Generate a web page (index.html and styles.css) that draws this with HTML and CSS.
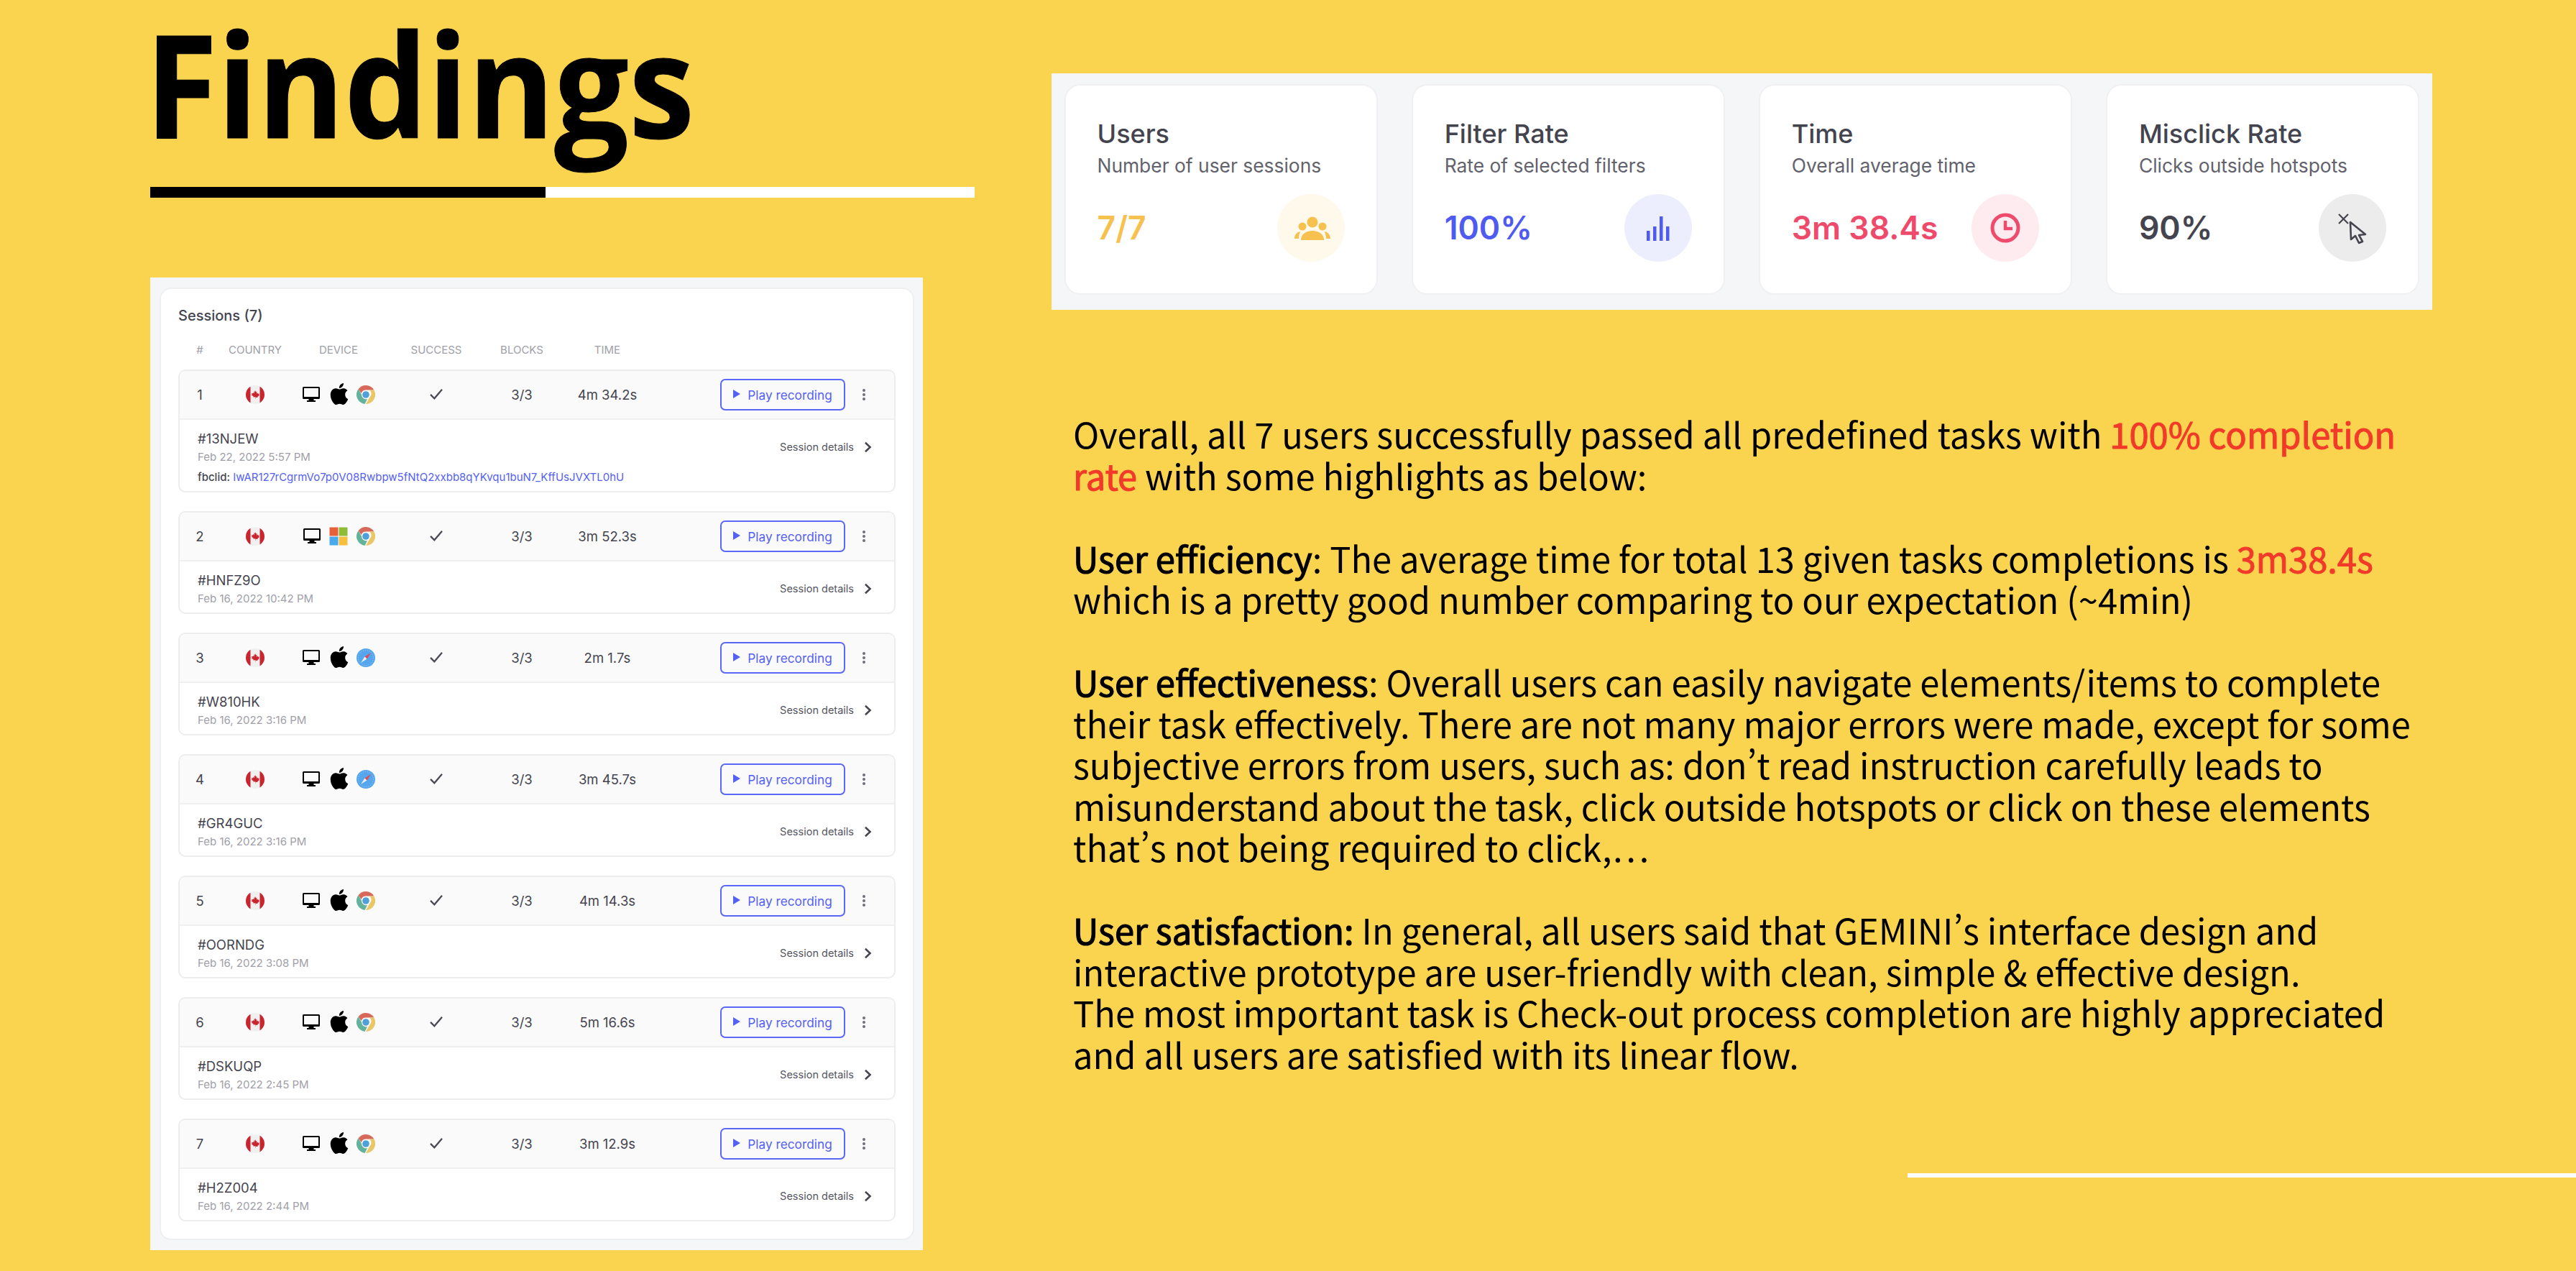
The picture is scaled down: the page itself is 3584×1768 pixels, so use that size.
FILE: index.html
```html
<!DOCTYPE html>
<html lang="en">
<head>
<meta charset="utf-8">
<title>Findings</title>
<link rel="stylesheet" href="styles.css">
</head>
<body>
<svg class="defs" width="0" height="0" aria-hidden="true">
  <symbol id="i-flag" viewBox="0 0 26 26">
    <clipPath id="flag-clip"><circle cx="13" cy="13" r="13"/></clipPath>
    <g clip-path="url(#flag-clip)">
      <rect width="26" height="26" fill="#f1f0f0"/>
      <rect width="6.5" height="26" fill="#c9252f"/>
      <rect x="19.5" width="6.5" height="26" fill="#c9252f"/>
      <path d="M13 7l1.3 2.4 1.2-.6-.5 3 1.6-1.2.5 1.2 1.7-.2-.6 1.800.8.5-2.800 2.100.3 1.100-2.900-.4V19h-.3v-2.800l-2.900.4.3-1.100-2.800-2.100.8-.5-.6-1.800 1.700.2.5-1.200 1.600 1.200-.5-3 1.200.6z" fill="#c9252f"/>
    </g>
  </symbol>
  <symbol id="i-desktop" viewBox="0 0 26 24">
    <path fill-rule="evenodd" d="M2.5 1h21A1.500 1.500 0 0 1 25 2.500v14a1.500 1.500 0 0 1-1.500 1.500H16.500v2H19v2H7v-2h2.500v-2h-7A1.500 1.500 0 0 1 1 16.500v-14A1.500 1.500 0 0 1 2.500 1zM3 3v12h20V3z" fill="#000"/>
  </symbol>
  <symbol id="i-apple" viewBox="0 0 24 24">
    <path fill="#000" d="M12.152 6.896c-.948 0-2.415-1.078-3.960-1.040-2.040.027-3.910 1.183-4.961 3.014-2.117 3.675-.546 9.103 1.519 12.090 1.013 1.454 2.208 3.090 3.792 3.039 1.520-.065 2.090-.987 3.935-.987 1.831 0 2.350.987 3.960.948 1.637-.026 2.676-1.480 3.676-2.948 1.156-1.688 1.636-3.325 1.662-3.415-.039-.013-3.182-1.221-3.220-4.857-.026-3.040 2.480-4.494 2.597-4.559-1.429-2.090-3.623-2.324-4.390-2.376-2-.156-3.675 1.090-4.610 1.090zM15.530 3.830c.843-1.012 1.400-2.427 1.245-3.830-1.207.052-2.662.805-3.532 1.818-.780.896-1.454 2.338-1.273 3.714 1.338.104 2.715-.688 3.559-1.701"/>
  </symbol>
  <symbol id="i-chrome" viewBox="0 0 26 26">
    <path d="M13 0a13 13 0 0 1 11.300 6.500H13a6.500 6.500 0 0 0-6.300 4.800L2.600 5.200A13 13 0 0 1 13 0z" fill="#d8685a"/>
    <path d="M24.300 6.500A13 13 0 0 1 13 26l5.600-9.700a6.500 6.500 0 0 0-.6-9.800z" fill="#e9c766"/>
    <path d="M2.600 5.200l5.600 9.700a6.500 6.500 0 0 0 6.800 4.400L11.500 25.900A13 13 0 0 1 2.600 5.200z" fill="#62b29c"/>
    <circle cx="13" cy="13" r="6" fill="#fff"/>
    <circle cx="13" cy="13" r="4.800" fill="#4fa0d8"/>
  </symbol>
  <symbol id="i-windows" viewBox="0 0 25 25">
    <rect x="0.5" y="0.5" width="11.5" height="11.5" fill="#e8603a"/>
    <rect x="13" y="0.5" width="11.5" height="11.5" fill="#8fbc36"/>
    <rect x="0.5" y="13" width="11.5" height="11.5" fill="#4aa8ec"/>
    <rect x="13" y="13" width="11.5" height="11.5" fill="#f8bf3e"/>
  </symbol>
  <symbol id="i-safari" viewBox="0 0 26 26">
    <circle cx="13" cy="13" r="13" fill="#55a6ec"/>
    <circle cx="13" cy="13" r="10.5" fill="none" stroke="#a9d3f6" stroke-width="1" stroke-dasharray="1 2"/>
    <path d="M20 6l-8.500 5.500 3 3z" fill="#e8474c"/>
    <path d="M6 20l5.500-8.500 3 3z" fill="#eef2f5"/>
  </symbol>
  <symbol id="i-check" viewBox="0 0 22 18">
    <path d="M2 10l6 6L20 2" fill="none" stroke="#4a4a55" stroke-width="2.6"/>
  </symbol>
  <symbol id="i-play" viewBox="0 0 10 12">
    <path d="M0 0l10 6-10 6z" fill="#5561f5"/>
  </symbol>
  <symbol id="i-dots" viewBox="0 0 6 18">
    <circle cx="3" cy="3" r="2" fill="#6e6e78"/>
    <circle cx="3" cy="9" r="2" fill="#6e6e78"/>
    <circle cx="3" cy="15" r="2" fill="#6e6e78"/>
  </symbol>
  <symbol id="i-chevron" viewBox="0 0 12 18">
    <path d="M2 2l7.500 7L2 16" fill="none" stroke="#45454f" stroke-width="2.8"/>
  </symbol>
</svg>

<main class="slide">
  <section class="left">
    <h1 class="title">Findings</h1>
    <div class="bar"><span class="bar-black"></span><span class="bar-white"></span></div>
    <div class="sessions-panel">
      <div class="sessions-card">
        <h2 class="sessions-title">Sessions (7)</h2>
        <div class="cols cols-head">
          <span>#</span><span>COUNTRY</span><span>DEVICE</span><span>SUCCESS</span><span>BLOCKS</span><span>TIME</span>
        </div>

        <article class="row">
          <div class="cols row-head">
            <span>1</span>
            <svg class="flag"><use href="#i-flag"/></svg>
            <span class="devices"><svg class="ic-desk"><use href="#i-desktop"/></svg><svg class="ic-os"><use href="#i-apple"/></svg><svg class="ic-br"><use href="#i-chrome"/></svg></span>
            <svg class="check"><use href="#i-check"/></svg>
            <span>3/3</span>
            <span>4m 34.2s</span>
            <a class="play"><svg class="play-ic"><use href="#i-play"/></svg>Play recording</a>
            <svg class="dots"><use href="#i-dots"/></svg>
          </div>
          <div class="row-body">
            <div class="meta">
              <div class="sid">#13NJEW</div>
              <div class="date">Feb 22, 2022 5:57 PM</div>
              <div class="fb"><b>fbclid:</b> <span>IwAR127rCgrmVo7p0V08Rwbpw5fNtQ2xxbb8qYKvqu1buN7_KffUsJVXTL0hU</span></div>
            </div>
            <a class="details">Session details<svg class="chev"><use href="#i-chevron"/></svg></a>
          </div>
        </article>

        <article class="row">
          <div class="cols row-head">
            <span>2</span>
            <svg class="flag"><use href="#i-flag"/></svg>
            <span class="devices"><svg class="ic-desk"><use href="#i-desktop"/></svg><svg class="ic-win"><use href="#i-windows"/></svg><svg class="ic-br"><use href="#i-chrome"/></svg></span>
            <svg class="check"><use href="#i-check"/></svg>
            <span>3/3</span>
            <span>3m 52.3s</span>
            <a class="play"><svg class="play-ic"><use href="#i-play"/></svg>Play recording</a>
            <svg class="dots"><use href="#i-dots"/></svg>
          </div>
          <div class="row-body">
            <div class="meta"><div class="sid">#HNFZ9O</div><div class="date">Feb 16, 2022 10:42 PM</div></div>
            <a class="details">Session details<svg class="chev"><use href="#i-chevron"/></svg></a>
          </div>
        </article>

        <article class="row">
          <div class="cols row-head">
            <span>3</span>
            <svg class="flag"><use href="#i-flag"/></svg>
            <span class="devices"><svg class="ic-desk"><use href="#i-desktop"/></svg><svg class="ic-os"><use href="#i-apple"/></svg><svg class="ic-br"><use href="#i-safari"/></svg></span>
            <svg class="check"><use href="#i-check"/></svg>
            <span>3/3</span>
            <span>2m 1.7s</span>
            <a class="play"><svg class="play-ic"><use href="#i-play"/></svg>Play recording</a>
            <svg class="dots"><use href="#i-dots"/></svg>
          </div>
          <div class="row-body">
            <div class="meta"><div class="sid">#W810HK</div><div class="date">Feb 16, 2022 3:16 PM</div></div>
            <a class="details">Session details<svg class="chev"><use href="#i-chevron"/></svg></a>
          </div>
        </article>

        <article class="row">
          <div class="cols row-head">
            <span>4</span>
            <svg class="flag"><use href="#i-flag"/></svg>
            <span class="devices"><svg class="ic-desk"><use href="#i-desktop"/></svg><svg class="ic-os"><use href="#i-apple"/></svg><svg class="ic-br"><use href="#i-safari"/></svg></span>
            <svg class="check"><use href="#i-check"/></svg>
            <span>3/3</span>
            <span>3m 45.7s</span>
            <a class="play"><svg class="play-ic"><use href="#i-play"/></svg>Play recording</a>
            <svg class="dots"><use href="#i-dots"/></svg>
          </div>
          <div class="row-body">
            <div class="meta"><div class="sid">#GR4GUC</div><div class="date">Feb 16, 2022 3:16 PM</div></div>
            <a class="details">Session details<svg class="chev"><use href="#i-chevron"/></svg></a>
          </div>
        </article>

        <article class="row">
          <div class="cols row-head">
            <span>5</span>
            <svg class="flag"><use href="#i-flag"/></svg>
            <span class="devices"><svg class="ic-desk"><use href="#i-desktop"/></svg><svg class="ic-os"><use href="#i-apple"/></svg><svg class="ic-br"><use href="#i-chrome"/></svg></span>
            <svg class="check"><use href="#i-check"/></svg>
            <span>3/3</span>
            <span>4m 14.3s</span>
            <a class="play"><svg class="play-ic"><use href="#i-play"/></svg>Play recording</a>
            <svg class="dots"><use href="#i-dots"/></svg>
          </div>
          <div class="row-body">
            <div class="meta"><div class="sid">#OORNDG</div><div class="date">Feb 16, 2022 3:08 PM</div></div>
            <a class="details">Session details<svg class="chev"><use href="#i-chevron"/></svg></a>
          </div>
        </article>

        <article class="row">
          <div class="cols row-head">
            <span>6</span>
            <svg class="flag"><use href="#i-flag"/></svg>
            <span class="devices"><svg class="ic-desk"><use href="#i-desktop"/></svg><svg class="ic-os"><use href="#i-apple"/></svg><svg class="ic-br"><use href="#i-chrome"/></svg></span>
            <svg class="check"><use href="#i-check"/></svg>
            <span>3/3</span>
            <span>5m 16.6s</span>
            <a class="play"><svg class="play-ic"><use href="#i-play"/></svg>Play recording</a>
            <svg class="dots"><use href="#i-dots"/></svg>
          </div>
          <div class="row-body">
            <div class="meta"><div class="sid">#DSKUQP</div><div class="date">Feb 16, 2022 2:45 PM</div></div>
            <a class="details">Session details<svg class="chev"><use href="#i-chevron"/></svg></a>
          </div>
        </article>

        <article class="row">
          <div class="cols row-head">
            <span>7</span>
            <svg class="flag"><use href="#i-flag"/></svg>
            <span class="devices"><svg class="ic-desk"><use href="#i-desktop"/></svg><svg class="ic-os"><use href="#i-apple"/></svg><svg class="ic-br"><use href="#i-chrome"/></svg></span>
            <svg class="check"><use href="#i-check"/></svg>
            <span>3/3</span>
            <span>3m 12.9s</span>
            <a class="play"><svg class="play-ic"><use href="#i-play"/></svg>Play recording</a>
            <svg class="dots"><use href="#i-dots"/></svg>
          </div>
          <div class="row-body">
            <div class="meta"><div class="sid">#H2Z004</div><div class="date">Feb 16, 2022 2:44 PM</div></div>
            <a class="details">Session details<svg class="chev"><use href="#i-chevron"/></svg></a>
          </div>
        </article>
      </div>
    </div>
  </section>

  <section class="right">
    <div class="stats">
      <div class="stat">
        <h3 class="stat-title">Users</h3>
        <p class="stat-sub">Number of user sessions</p>
        <div class="stat-foot">
          <span class="stat-val c-amber">7/7</span>
          <span class="stat-circle bg-amber">
            <svg class="stat-ic" viewBox="0 0 48 48"><circle cx="26" cy="16" r="7.5" fill="#f6c14f"/><circle cx="12" cy="22" r="5.5" fill="#f6c14f"/><circle cx="40" cy="22" r="5.5" fill="#f6c14f"/><path d="M10 41c0-8 7-13 16-13s16 5 16 13z" fill="#f6c14f"/><path d="M1 39c0-5 3-9 8-10-1 3-2 6-2 10zM51 39c0-5-3-9-8-10 1 3 2 6 2 10z" fill="#f6c14f"/></svg>
          </span>
        </div>
      </div>
      <div class="stat">
        <h3 class="stat-title">Filter Rate</h3>
        <p class="stat-sub">Rate of selected filters</p>
        <div class="stat-foot">
          <span class="stat-val c-blue">100%</span>
          <span class="stat-circle bg-blue">
            <svg class="stat-ic" viewBox="0 0 48 48"><rect x="8" y="28" width="4.5" height="14" fill="#4f5bf0"/><rect x="17" y="22" width="4.5" height="20" fill="#4f5bf0"/><rect x="26" y="8" width="4.5" height="34" fill="#4f5bf0"/><rect x="35" y="22" width="4.5" height="20" fill="#4f5bf0"/></svg>
          </span>
        </div>
      </div>
      <div class="stat">
        <h3 class="stat-title">Time</h3>
        <p class="stat-sub">Overall average time</p>
        <div class="stat-foot">
          <span class="stat-val c-red">3m 38.4s</span>
          <span class="stat-circle bg-red">
            <svg class="stat-ic" viewBox="0 0 48 48"><circle cx="24" cy="24" r="18" fill="none" stroke="#ee4a6b" stroke-width="5"/><path d="M24 14v11h10" fill="none" stroke="#ee4a6b" stroke-width="4.5"/></svg>
          </span>
        </div>
      </div>
      <div class="stat">
        <h3 class="stat-title">Misclick Rate</h3>
        <p class="stat-sub">Clicks outside hotspots</p>
        <div class="stat-foot">
          <span class="stat-val c-dark">90%</span>
          <span class="stat-circle bg-gray">
            <svg class="stat-ic" viewBox="0 0 48 48"><path d="M5 5l13 13M18 5L5 18" fill="none" stroke="#45454f" stroke-width="2.2"/><path d="M21 16l21 17-9 1 5 9-5 2-5-10-6 5z" fill="none" stroke="#45454f" stroke-width="2.6" stroke-linejoin="round"/></svg>
          </span>
        </div>
      </div>
    </div>

    <div class="copy">
      <p>Overall, all 7 users successfully passed all predefined tasks with <span class="hl">100% completion<br>rate</span> with some highlights as below:</p>
      <p><b>User efficiency</b>: The average time for total 13 given tasks completions is <span class="hl">3m38.4s</span><br>which is a pretty good number comparing to our expectation (~4min)</p>
      <p><b>User effectiveness</b>: Overall users can easily navigate elements/items to complete<br>their task effectively. There are not many major errors were made, except for some<br>subjective errors from users, such as: don’t read instruction carefully leads to<br>misunderstand about the task, click outside hotspots or click on these elements<br>that’s not being required to click,…</p>
      <p><b>User satisfaction:</b> In general, all users said that GEMINI’s interface design and<br>interactive prototype are user-friendly with clean, simple &amp; effective design.<br>The most important task is Check-out process completion are highly appreciated<br>and all users are satisfied with its linear flow.</p>
    </div>
    <div class="end-rule"></div>
  </section>
</main>
</body>
</html>
```
FILE: styles.css
```css
* { box-sizing: border-box; }
html, body { margin: 0; padding: 0; }
body { width: 3584px; height: 1768px; overflow: hidden; background: #fad44f; font-family: "Inter", "Liberation Sans", sans-serif; }
.defs { display: block; height: 0; width: 0; }
.slide { display: flex; height: 1768px; }

.left { width: 1463px; flex: none; padding-left: 209px; }
.title { margin: 0 0 0 -7px; height: 260px; font-family: "Open Sans", "Noto Sans", sans-serif; font-weight: 700; font-size: 199px; line-height: 230px; color: #000; -webkit-text-stroke: 1px #000; transform: scaleX(0.921); transform-origin: left top; white-space: nowrap; }
.bar { display: flex; width: 1147px; height: 15px; }
.bar-black { width: 550px; background: #000; }
.bar-white { flex: 1; background: #fff; }

.sessions-panel { margin-top: 111px; width: 1075px; height: 1353px; padding: 14px 12px 14px 13px; background: #f5f6f8; }
.sessions-card { height: 1325px; padding: 0 24px; background: #fff; border: 2px solid #eeeff1; border-radius: 16px; }
.sessions-title { margin: 0; padding-top: 24px; height: 66px; font-size: 20px; line-height: 26px; font-weight: 500; color: #44444f; }
.cols { display: grid; grid-template-columns: 56px 98px 134px 138px 100px 138px 88px 174px 52px; align-items: center; justify-items: center; }
.cols-head { height: 36px; margin-bottom: 10px; padding-left: 2px; font-size: 15px; color: #a0a0a8; }

.row { margin-bottom: 26px; border: 2px solid #eceded; border-radius: 10px; background: #fff; overflow: hidden; }
.row-head { height: 68px; background: #fafafa; border-bottom: 2px solid #f0f0f1; font-size: 18.5px; color: #45454f; }
.row-head > :nth-child(7) { grid-column: 8; }
.flag { width: 26px; height: 26px; }
.devices { display: flex; align-items: center; gap: 9.5px; }
.ic-desk { width: 26px; height: 24px; }
.ic-os { width: 30px; height: 30px; margin: -2px 0 0 1px; }
.ic-win { width: 26px; height: 26px; margin: 0 2px; }
.ic-br { width: 26px; height: 26px; }
.check { width: 20px; height: 16px; margin-top: -3px; }
.play { display: flex; align-items: center; justify-content: center; gap: 10px; width: 174px; height: 44px; border: 2px solid #5b67f5; border-radius: 7px; color: #5561f5; font-size: 17.3px; white-space: nowrap; }
.play-ic { width: 10px; height: 12px; margin-top: -2px; }
.dots { width: 6px; height: 18px; }

.row-body { display: flex; justify-content: space-between; align-items: flex-start; padding: 14px 31px 0 25px; }
.meta { padding-bottom: 9px; }
.sid { font-size: 18.5px; line-height: 24px; color: #45454f; }
.date { font-size: 15px; line-height: 20px; margin-top: 4px; color: #a0a0a8; }
.fb { font-size: 15px; line-height: 20px; margin-top: 8px; color: #45454f; white-space: nowrap; }
.fb b { font-weight: 500; }
.fb span { color: #5561f5; }
.details { display: flex; align-items: center; gap: 14px; margin-top: 12px; font-size: 14.5px; line-height: 24px; color: #55555f; }
.chev { width: 11px; height: 16px; }

.right { flex: 1; display: flex; flex-direction: column; }
.stats { display: flex; gap: 47.5px; margin-top: 102px; width: 1921px; height: 329px; padding: 15px 18px 21px; background: #f5f6f8; }
.stat { flex: 1; padding: 46px 44px 0 43.5px; background: #fff; border: 2px solid #f0f0f2; border-radius: 22px; }
.stat-title { margin: 0; font-size: 36px; line-height: 42px; font-weight: 500; color: #44444f; }
.stat-sub { margin: 3px 0 0; font-size: 26.4px; line-height: 40px; color: #62626c; }
.stat-foot { display: flex; justify-content: space-between; align-items: center; margin-top: 20px; }
.stat-val { font-size: 44.5px; font-weight: 600; }
.stat-circle { display: flex; align-items: center; justify-content: center; width: 94px; height: 94px; border-radius: 50%; }
.stat-ic { width: 48px; height: 48px; overflow: visible; }
.c-amber { color: #f6c14f; }
.c-blue { color: #4f5bf0; }
.c-red { color: #ee4a6b; }
.c-dark { color: #44444f; }
.bg-amber { background: #fef9eb; }
.bg-blue { background: #edeefd; }
.bg-red { background: #fdebef; }
.bg-gray { background: #ececec; }

.copy { margin-top: 143px; padding-left: 30px; font-family: "Noto Sans CJK SC", "Noto Sans", sans-serif; font-size: 48.85px; line-height: 57.5px; color: #000; white-space: nowrap; font-variant-east-asian: proportional-width; }
.copy p { margin: 0 0 57.5px; }
.copy b { font-weight: 400; -webkit-text-stroke: 1.2px #000; }
.hl { color: #f23a2a; -webkit-text-stroke: 1px #f23a2a; }
.end-rule { width: 930px; height: 6px; margin-top: auto; margin-bottom: 130px; align-self: flex-end; background: #fff; }
```
